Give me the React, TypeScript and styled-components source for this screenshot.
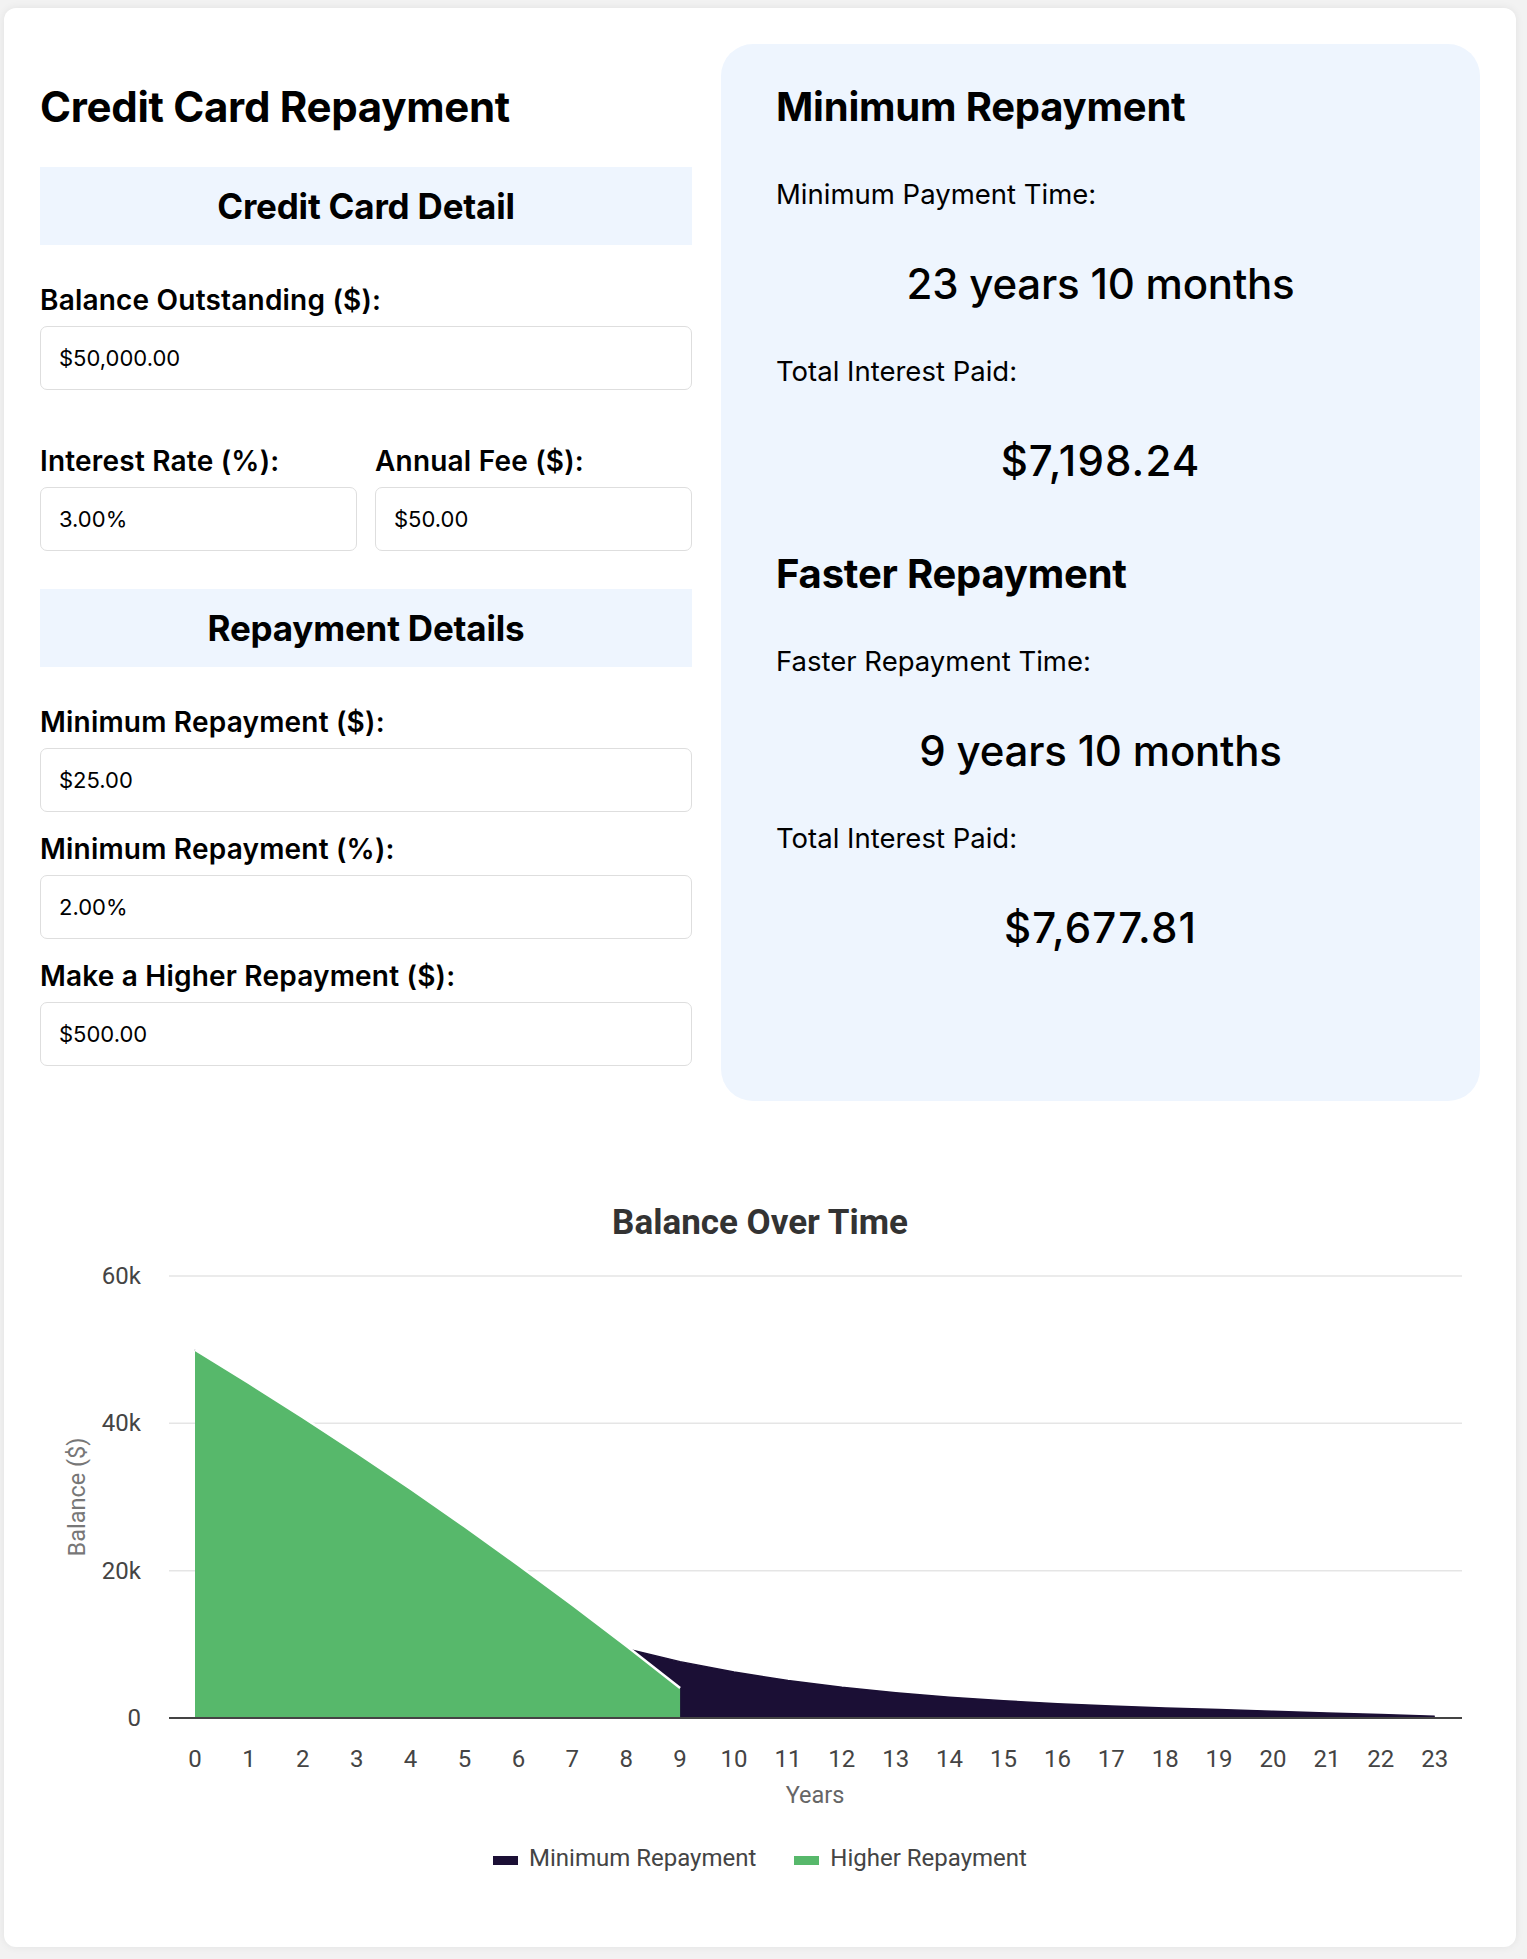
import React from 'react';
import styled, { createGlobalStyle } from 'styled-components';

const GlobalStyle = createGlobalStyle`
  * { box-sizing: border-box; }
  body {
    margin: 0;
    background: #f2f2f2;
    font-family: Inter, "Noto Sans", sans-serif;
    color: #000;
  }
`;

const Page = styled.div`
  padding: 8px 11px 13px 4px;
`;

const Card = styled.div`
  background: #fff;
  border-radius: 12px;
  box-shadow: 0 0 8px rgba(0, 0, 0, 0.07);
  padding: 36px;
`;

const TopGrid = styled.div`
  display: grid;
  grid-template-columns: 652fr 759fr;
  column-gap: 29px;
  align-items: stretch;
`;

const LeftCol = styled.div`
  display: flex;
  flex-direction: column;
  padding-bottom: 35px;
`;

const Title = styled.h1`
  margin: 38px 0 35px;
  font-size: 42px;
  line-height: 50px;
  font-weight: 700;
  letter-spacing: -0.3px;
`;

const SectionBar = styled.h2`
  margin: 0 0 39px;
  height: 78px;
  display: flex;
  align-items: center;
  justify-content: center;
  background: #eef5fe;
  font-size: 35px;
  font-weight: 700;
  letter-spacing: -0.2px;
`;

const Field = styled.div<{ $gap?: number }>`
  display: flex;
  flex-direction: column;
  margin-bottom: ${(p) => (p.$gap ?? 21)}px;
`;

const Label = styled.label`
  font-size: 28px;
  line-height: 32px;
  font-weight: 600;
  letter-spacing: 0.2px;
  margin-bottom: 10px;
`;

const Input = styled.input`
  height: 64px;
  width: 100%;
  padding: 0 18px;
  border: 1.5px solid #dedede;
  border-radius: 7px;
  font-family: Inter, "Noto Sans", sans-serif;
  font-size: 22px;
  color: #000;
  background: #fff;
  outline: none;
`;

const FieldRow = styled.div`
  display: grid;
  grid-template-columns: 1fr 1fr;
  column-gap: 18px;
  margin-bottom: 38px;
`;

const ResultPanel = styled.div`
  background: #eef5fe;
  border-radius: 32px;
  padding: 39px 55px;
  display: flex;
  flex-direction: column;
`;

const ResultHeading = styled.h2<{ $top?: number }>`
  margin: ${(p) => p.$top ?? 0}px 0 0;
  font-size: 40px;
  line-height: 48px;
  font-weight: 700;
  letter-spacing: -0.2px;
`;

const ResultLabel = styled.div`
  margin-top: 48px;
  font-size: 27.5px;
  line-height: 31px;
  font-weight: 400;
`;

const ResultValue = styled.div<{ $numeric?: boolean }>`
  margin-top: 49px;
  font-size: 42px;
  line-height: 49px;
  font-weight: 500;
  text-align: center;
  letter-spacing: ${(p) => (p.$numeric ? '1.1px' : '-0.2px')};
`;

const ChartSection = styled.section`
  margin-top: 101px;
  margin-bottom: 39px;
  display: flex;
  flex-direction: column;
  align-items: center;
`;

const ChartTitle = styled.h3`
  margin: 0;
  font-family: Roboto, "Liberation Sans", sans-serif;
  font-size: 35px;
  line-height: 42px;
  font-weight: 700;
  color: #333;
`;

const ChartSvg = styled.svg`
  display: block;
  margin-top: 7px;
  font-family: Roboto, "Liberation Sans", sans-serif;
`;

const Legend = styled.div`
  margin-top: 23px;
  display: flex;
  gap: 38px;
  align-items: center;
  font-family: Roboto, "Liberation Sans", sans-serif;
`;

const LegendItem = styled.div`
  display: flex;
  align-items: center;
  gap: 11px;
  font-size: 24px;
  line-height: 28px;
  color: #444;
`;

const LegendSwatch = styled.span<{ $color: string }>`
  display: inline-block;
  width: 25px;
  height: 9px;
  margin-top: 5px;
  background: ${(p) => p.$color};
`;

const DARK = '#1b0f35';
const GREEN = '#57b86b';

function simulate(pay: (b: number) => number): number[] {
  let b = 50000;
  const r = 0.03 / 12;
  const pts: number[] = [b];
  let m = 0;
  while (b > 0 && m < 600) {
    const interest = b * r;
    const p = Math.min(pay(b), b + interest);
    b = b + interest - p;
    m++;
    if (b <= 0.005) break;
    if (m % 12 === 0) {
      b += 50;
      pts.push(b);
    }
  }
  return pts;
}

const W = 1440;
const H = 570;
const PLOT_TOP = 25;
const PLOT_BOTTOM = 467;
const GRID_LEFT = 129;
const GRID_RIGHT = 1422;
const X0 = 155;
const STEP = 53.9;
const YEARS = Array.from({ length: 24 }, (_, i) => i);

const xOf = (i: number) => X0 + STEP * i;
const yOf = (v: number) => PLOT_BOTTOM - (v / 60000) * (PLOT_BOTTOM - PLOT_TOP);

function BalanceChart() {
  const minSim = simulate((b) => Math.max(25, b * 0.02));
  const minPts = YEARS.map((i) => Math.max(0, minSim[i] ?? 0));
  const fastSim = simulate(() => 500);
  const fastPts = fastSim.slice(0, 24);

  const minLine = minPts.map((v, i) => `${xOf(i)},${yOf(v)}`).join(' ');
  const minArea = `${minLine} ${xOf(23)},${PLOT_BOTTOM} ${xOf(0)},${PLOT_BOTTOM}`;
  const fastLine = fastPts.map((v, i) => `${xOf(i)},${yOf(v)}`).join(' ');
  const lastFast = fastPts.length - 1;
  const fastArea = `${fastLine} ${xOf(lastFast)},${PLOT_BOTTOM} ${xOf(0)},${PLOT_BOTTOM}`;

  const ticks = [60000, 40000, 20000];

  return (
    <ChartSvg width={W} height={H} viewBox={`0 0 ${W} ${H}`}>
      {ticks.map((t) => (
        <line key={t} x1={GRID_LEFT} x2={GRID_RIGHT} y1={yOf(t)} y2={yOf(t)} stroke="#e5e5e5" strokeWidth={1.5} />
      ))}
      {[60000, 40000, 20000, 0].map((t) => (
        <text key={t} x={101} y={yOf(t)} textAnchor="end" dominantBaseline="central" fontSize={24} fill="#444">
          {t === 0 ? '0' : `${t / 1000}k`}
        </text>
      ))}
      <polygon points={minArea} fill={DARK} />
      <polyline points={minLine} fill="none" stroke={DARK} strokeWidth={1.5} />
      <polygon points={fastArea} fill={GREEN} />
      <polyline points={fastLine} fill="none" stroke="#fff" strokeWidth={2.5} />
      <line x1={GRID_LEFT} x2={GRID_RIGHT} y1={PLOT_BOTTOM} y2={PLOT_BOTTOM} stroke="#444" strokeWidth={2} />
      {YEARS.map((i) => (
        <text key={i} x={xOf(i)} y={508} textAnchor="middle" dominantBaseline="central" fontSize={24} fill="#444">
          {i}
        </text>
      ))}
      <text x={775} y={544} textAnchor="middle" dominantBaseline="central" fontSize={23.5} fill="#666">
        Years
      </text>
      <text
        x={37}
        y={246}
        textAnchor="middle"
        dominantBaseline="central"
        fontSize={23.5}
        fill="#777"
        transform="rotate(-90 37 246)"
      >
        Balance ($)
      </text>
    </ChartSvg>
  );
}

export default function App() {
  return (
    <>
      <GlobalStyle />
      <Page>
        <Card>
          <TopGrid>
            <LeftCol>
              <Title>Credit Card Repayment</Title>
              <SectionBar>Credit Card Detail</SectionBar>
              <Field $gap={55}>
                <Label>Balance Outstanding ($):</Label>
                <Input defaultValue="$50,000.00" />
              </Field>
              <FieldRow>
                <Field $gap={0}>
                  <Label>Interest Rate (%):</Label>
                  <Input defaultValue="3.00%" />
                </Field>
                <Field $gap={0}>
                  <Label>Annual Fee ($):</Label>
                  <Input defaultValue="$50.00" />
                </Field>
              </FieldRow>
              <SectionBar>Repayment Details</SectionBar>
              <Field>
                <Label>Minimum Repayment ($):</Label>
                <Input defaultValue="$25.00" />
              </Field>
              <Field>
                <Label>Minimum Repayment (%):</Label>
                <Input defaultValue="2.00%" />
              </Field>
              <Field $gap={0}>
                <Label>Make a Higher Repayment ($):</Label>
                <Input defaultValue="$500.00" />
              </Field>
            </LeftCol>
            <ResultPanel>
              <ResultHeading>Minimum Repayment</ResultHeading>
              <ResultLabel>Minimum Payment Time:</ResultLabel>
              <ResultValue>23 years 10 months</ResultValue>
              <ResultLabel>Total Interest Paid:</ResultLabel>
              <ResultValue $numeric>$7,198.24</ResultValue>
              <ResultHeading $top={65}>Faster Repayment</ResultHeading>
              <ResultLabel>Faster Repayment Time:</ResultLabel>
              <ResultValue>9 years 10 months</ResultValue>
              <ResultLabel>Total Interest Paid:</ResultLabel>
              <ResultValue $numeric>$7,677.81</ResultValue>
            </ResultPanel>
          </TopGrid>
          <ChartSection>
            <ChartTitle>Balance Over Time</ChartTitle>
            <BalanceChart />
            <Legend>
              <LegendItem>
                <LegendSwatch $color={DARK} />
                Minimum Repayment
              </LegendItem>
              <LegendItem>
                <LegendSwatch $color={GREEN} />
                Higher Repayment
              </LegendItem>
            </Legend>
          </ChartSection>
        </Card>
      </Page>
    </>
  );
}
